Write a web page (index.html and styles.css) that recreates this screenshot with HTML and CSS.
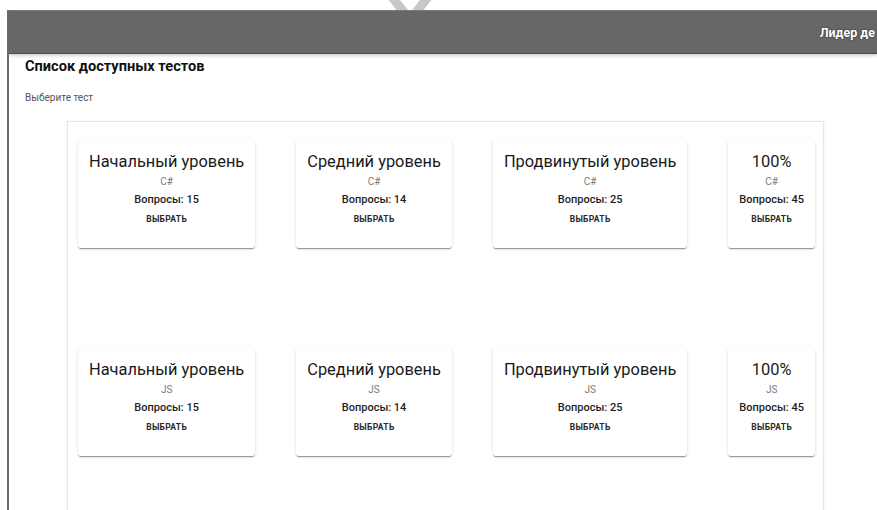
FILE: index.html
```html
<!DOCTYPE html>
<html lang="ru">
<head>
<meta charset="utf-8">
<title>Список доступных тестов</title>
<link rel="stylesheet" href="styles.css">
</head>
<body>
<svg class="mark" width="62" height="10" viewBox="0 0 62 10" aria-hidden="true">
  <polyline points="6,-12 31,20 56,-12" fill="none" stroke="#c8c8c8" stroke-width="9"/>
</svg>
<div class="app">
  <header class="topbar">
    <span class="topbar-user">Лидер де</span>
  </header>
  <main class="content">
    <h1 class="page-title">Список доступных тестов</h1>
    <p class="page-hint">Выберите тест</p>
    <section class="panel">
      <div class="row">
        <div class="card">
          <div class="card-title">Начальный уровень</div>
          <div class="card-lang">C#</div>
          <div class="card-count">Вопросы: 15</div>
          <button class="card-btn">Выбрать</button>
        </div>
        <div class="card">
          <div class="card-title">Средний уровень</div>
          <div class="card-lang">C#</div>
          <div class="card-count">Вопросы: 14</div>
          <button class="card-btn">Выбрать</button>
        </div>
        <div class="card">
          <div class="card-title">Продвинутый уровень</div>
          <div class="card-lang">C#</div>
          <div class="card-count">Вопросы: 25</div>
          <button class="card-btn">Выбрать</button>
        </div>
        <div class="card">
          <div class="card-title">100%</div>
          <div class="card-lang">C#</div>
          <div class="card-count">Вопросы: 45</div>
          <button class="card-btn">Выбрать</button>
        </div>
      </div>
      <div class="row">
        <div class="card">
          <div class="card-title">Начальный уровень</div>
          <div class="card-lang">JS</div>
          <div class="card-count">Вопросы: 15</div>
          <button class="card-btn">Выбрать</button>
        </div>
        <div class="card">
          <div class="card-title">Средний уровень</div>
          <div class="card-lang">JS</div>
          <div class="card-count">Вопросы: 14</div>
          <button class="card-btn">Выбрать</button>
        </div>
        <div class="card">
          <div class="card-title">Продвинутый уровень</div>
          <div class="card-lang">JS</div>
          <div class="card-count">Вопросы: 25</div>
          <button class="card-btn">Выбрать</button>
        </div>
        <div class="card">
          <div class="card-title">100%</div>
          <div class="card-lang">JS</div>
          <div class="card-count">Вопросы: 45</div>
          <button class="card-btn">Выбрать</button>
        </div>
      </div>
    </section>
  </main>
</div>
</body>
</html>
```
FILE: styles.css
```css
html, body {
  margin: 0;
  padding: 0;
  background: #fff;
  overflow: hidden;
}

body {
  font-family: Roboto, "Liberation Sans", Arial, sans-serif;
  color: #1e1e1e;
  position: relative;
  height: 510px;
}

/* decorative chevron peeking above the app bar */
.mark {
  position: absolute;
  left: 379px;
  top: 0;
}

.app {
  position: relative;
  margin: 10px 0 0 7px;
  border-left: 2px solid #6b6b6b;
  height: 500px;
  overflow: hidden;
}

.topbar {
  height: 42px;
  background: #676767;
  border-top: 1px solid #7a7a7a;
  border-bottom: 1px solid #4a4a4a;
  box-shadow: 0 2px 3px rgba(0, 0, 0, 0.18);
  display: flex;
  align-items: center;
  justify-content: flex-end;
  padding-right: 2px;
  white-space: nowrap;
}

.topbar-user {
  color: #fff;
  font-weight: 700;
  font-size: 12.5px;
  text-shadow: 0 0 2px #222;
}

.content {
  padding: 2px 0 0 16px;
}

.page-title {
  margin: 0;
  font-size: 14.6px;
  line-height: 20px;
  font-weight: 700;
  color: #111;
}

.page-hint {
  margin: 15px 0 0;
  font-size: 10px;
  line-height: 14px;
  color: #555;
}

.panel {
  margin: 16px 0 0 42px;
  width: 757px;
  height: 400px;
  border: 1px solid #e6e6e6;
  box-shadow: 0 0 3px rgba(0, 0, 0, 0.06);
  padding: 18px 0 0 10px;
  box-sizing: border-box;
  display: flex;
  flex-direction: column;
  gap: 100px;
}

.row {
  display: flex;
  gap: 41px;
  align-items: flex-start;
}

.card {
  background: #fff;
  border-radius: 3px;
  padding: 10px 11px 20px;
  text-align: center;
  white-space: nowrap;
  box-shadow: 0 2px 1px -1px rgba(0, 0, 0, 0.25), 0 1px 1px 0 rgba(0, 0, 0, 0.16), 0 1px 3px 0 rgba(0, 0, 0, 0.14);
}

.card-title {
  font-size: 16.4px;
  line-height: 24px;
  color: #1a1a1a;
}

.card-lang {
  font-size: 10px;
  line-height: 16px;
  color: #7a7a7a;
}

.card-count {
  font-size: 11px;
  line-height: 20px;
  font-weight: 500;
  color: #1e1e1e;
}

.card-btn {
  display: block;
  margin: 0 auto;
  padding: 0;
  border: 0;
  background: none;
  font-family: inherit;
  font-size: 8.5px;
  line-height: 18px;
  font-weight: 700;
  letter-spacing: 0.3px;
  text-transform: uppercase;
  color: #2a2a2a;
}
```
